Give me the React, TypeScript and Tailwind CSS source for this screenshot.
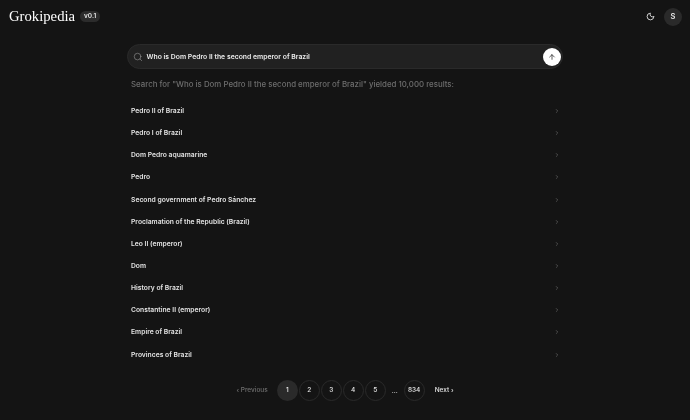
import React from "react";
import { ArrowUp, ChevronRight, Moon, Search } from "lucide-react";

const query = "Who is Dom Pedro II the second emperor of Brazil";

const results = [
  "Pedro II of Brazil",
  "Pedro I of Brazil",
  "Dom Pedro aquamarine",
  "Pedro",
  "Second government of Pedro Sánchez",
  "Proclamation of the Republic (Brazil)",
  "Leo II (emperor)",
  "Dom",
  "History of Brazil",
  "Constantine II (emperor)",
  "Empire of Brazil",
  "Provinces of Brazil"
];

const pages = ["2", "3", "4", "5"];

const App: React.FC = () => {
  return (
    <div className="h-[420px] w-[690px] overflow-hidden bg-[#141414] font-['Inter',sans-serif] text-white [will-change:transform]">
      {/* Header */}
      <header className="flex h-[33px] items-center justify-between pl-[9px] pr-[8px]">
        <div className="flex items-center gap-[5px]">
          <span className="-mt-[1px] font-['Liberation_Serif',serif] text-[14.7px] leading-[20px] text-[#ffffff]">
            Grokipedia
          </span>
          <span className="flex h-[11px] w-[20px] items-center justify-center rounded-full bg-[#2c2c2c] text-[6.5px] font-semibold text-[#e8e8e8]">
            v0.1
          </span>
        </div>
        <div className="flex items-center gap-[9px]">
          <Moon size={9} strokeWidth={2.2} className="text-[#f0f0f0]" />
          <div className="flex h-[18px] w-[18px] items-center justify-center rounded-full bg-[#2a2a2a] text-[7.5px] font-semibold text-[#e5e5e5]">
            S
          </div>
        </div>
      </header>

      <main className="mx-auto mt-[11px] w-[436px]">
        {/* Search box */}
        <div className="flex h-[25px] items-center rounded-full border border-[#2a2a2a] bg-[#212121] pl-[5px] pr-[1.5px]">
          <Search size={10} strokeWidth={1.4} className="text-[#9a9a9a]" />
          <span className="ml-[3.5px] flex-1 pt-[1px] text-[6.85px] font-semibold text-[#ececec]">
            {query}
          </span>
          <div className="flex h-[18px] w-[18px] items-center justify-center rounded-full bg-white">
            <ArrowUp size={8} strokeWidth={2.4} className="text-[#333333]" />
          </div>
        </div>

        <p className="mt-[9px] px-[4px] text-[7.88px] font-medium leading-[12px] text-[#6e6e6e]">
          Search for "{query}" yielded 10,000 results:
        </p>

        {/* Results */}
        <ul className="mt-[10px]">
          {results.map((title) => (
            <li
              key={title}
              className="flex h-[22.15px] items-center justify-between pl-[4px] pr-[3.5px]"
            >
              <span className="text-[6.75px] font-semibold text-[#e4e4e4]">
                {title}
              </span>
              <ChevronRight
                size={6}
                strokeWidth={1.8}
                className="text-[#8a8a8a]"
              />
            </li>
          ))}
        </ul>

        {/* Pagination */}
        <nav className="mt-[14px] flex items-center justify-center text-[6.5px] font-medium">
          <span className="mr-[9px] pt-[1px] text-[#707070]">‹ Previous</span>
          <span className="flex h-[21px] w-[21px] items-center justify-center rounded-full bg-[#2a2a2a] pt-[1px] text-[#ececec]">
            1
          </span>
          <div className="ml-[1px] flex gap-[1px]">
            {pages.map((page) => (
              <span
                key={page}
                className="flex h-[21px] w-[21px] items-center justify-center rounded-full border border-[#2a2a2a] pt-[1px] text-[#e4e4e4]"
              >
                {page}
              </span>
            ))}
          </div>
          <span className="mx-[6px] translate-y-[2px] text-[#e4e4e4]">...</span>
          <span className="flex h-[21px] w-[21px] items-center justify-center rounded-full border border-[#2a2a2a] pt-[1px] text-[#e4e4e4]">
            834
          </span>
          <span className="ml-[10px] pt-[1px] text-[#e4e4e4]">Next ›</span>
        </nav>
      </main>
    </div>
  );
};

export default App;
